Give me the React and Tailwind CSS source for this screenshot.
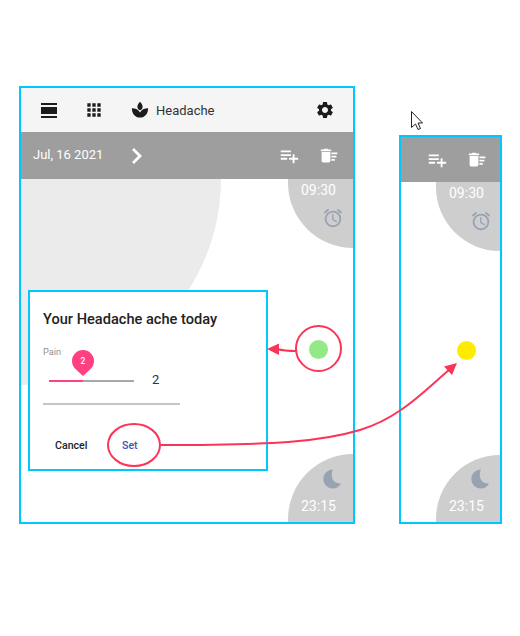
import { MdApps, MdSettings, MdPlaylistAdd, MdAccessAlarm } from "react-icons/md";

function DayIcon() {
  return (
    <svg viewBox="0 0 16 16" className="size-4" fill="#1c1c1c">
      <path d="M0 0h16v2H0zM0 4h16v7H0zM0 13h16v2H0z" />
    </svg>
  );
}

function SproutIcon() {
  return (
    <svg viewBox="0 0 18 18" className="size-[18px]" fill="#1c1c1c">
      <path d="M9 .8C10.6 2.6 11.6 4.2 11.6 5.8S10.5 8.7 9 9.3C7.5 8.7 6.4 7.4 6.4 5.8S7.4 2.6 9 .8zM.8 7.2C4.8 7.2 7.6 8.7 9 11.6 10.4 8.7 13.2 7.2 17.2 7.2 17 12.7 13.9 16.6 9 16.6S1 12.7.8 7.2z" />
    </svg>
  );
}

function SweepIcon() {
  return (
    <svg viewBox="0 0 18 16" className="h-4 w-[18px]" fill="white">
      <path d="M3.6 1.6 4.4.8h3.2l.8.8h2.8v1.600H.8V1.600zM1.600 4h8.800v8.800c0 1-.8 1.700-1.700 1.700H3.300c-1 0-1.700-.7-1.700-1.700zM11.400 4.600h6v1.700h-6zM11.400 7.800h5v1.700h-5zM11.400 11h3.400v1.700h-3.400z" />
    </svg>
  );
}

function Moon() {
  return (
    <svg viewBox="0 0 18 20" className="h-5 w-[18px]" fill="#98a3b2">
      <path d="M10 .6C4.500.8.4 4.800.4 10S4.500 19.400 9.700 19.400C13.500 19.400 16.500 17.500 18 14.400 12.500 14.800 8.800 11.200 8.800 6.200 8.800 4 9.200 2.200 10 .6z" />
    </svg>
  );
}

function Actions() {
  return (
    <>
      <MdPlaylistAdd className="size-[22px] text-white" />
      <div className="ml-[20px]"><SweepIcon /></div>
    </>
  );
}

function Morning({ className }) {
  return (
    <div className={`flex h-[69px] flex-col overflow-hidden rounded-bl-[68px] bg-[#cecece] ${className}`}>
      <span className="ml-[13px] mt-[3px] text-[14px] leading-4 text-white">09:30</span>
      <MdAccessAlarm className="ml-[34px] mt-[9px] size-[22px] shrink-0 text-[#98a3b2]" />
    </div>
  );
}

function Night({ className }) {
  return (
    <div className={`flex flex-col justify-end overflow-hidden rounded-tl-[68px] bg-[#cecece] pb-2 ${className}`}>
      <div className="ml-[35px] h-5"><Moon /></div>
      <span className="ml-[13px] mt-[9px] text-[14px] leading-4 text-white">23:15</span>
    </div>
  );
}

function Dialog() {
  return (
    <div className="absolute left-[7px] top-[111px] flex h-[181px] w-[240px] flex-col border-2 border-[#00c8ff] bg-white pl-[13px]">
      <h1 className="mt-[17px] text-[14.6px] font-medium leading-5 text-[#222]">Your Headache ache today</h1>
      <span className="mt-[17px] text-[9.2px] leading-3 text-[#929292]">Pain</span>
      <div className="mt-[12px] flex h-[22px] items-center">
        <div className="relative ml-[6px] flex h-[2px] w-[85px] bg-[#a8a8a8]">
          <div className="w-[34px] bg-[#ff4081]" />
          <svg viewBox="0 0 22 26" className="absolute -top-[30px] left-[23px] h-[26px] w-[22px]">
            <path d="M11 26 3.2 18.8A11 11 0 1 1 18.8 18.8z" fill="#ff4081" />
            <text x="11" y="14" textAnchor="middle" fontSize="8.5" fontWeight="500" fill="white">2</text>
          </svg>
        </div>
        <span className="-mt-[2px] ml-[18px] text-[13px] text-[#333]">2</span>
      </div>
      <div className="mt-[11px] h-[2px] w-[137px] bg-[#c6c6c6]" />
      <div className="mt-[33px] flex text-[10.6px] font-medium leading-4">
        <span className="ml-3 w-[67px] text-[#222]">Cancel</span>
        <span className="text-[#3f51b5]">Set</span>
      </div>
    </div>
  );
}

export default function App() {
  return (
    <div className="relative flex h-[636px] w-[520px] items-end gap-11 overflow-hidden bg-white pb-[112px] pl-[19px] font-[Roboto,sans-serif]">
      <div className="flex h-[438px] w-[336px] flex-col border-2 border-[#00c8ff]">
        <div className="flex h-11 items-center bg-[#f5f5f5]">
          <div className="ml-[20px] mt-px"><DayIcon /></div>
          <MdApps className="ml-[27px] size-5 text-[#1c1c1c]" />
          <div className="ml-[27px]"><SproutIcon /></div>
          <span className="ml-[7px] mt-[2px] text-[13px] text-[#333]">Headache</span>
          <MdSettings className="ml-auto mr-[18px] size-5 text-[#1c1c1c]" />
        </div>
        <div className="flex h-[47px] items-center bg-[#9e9e9e]">
          <span className="-mt-px ml-3 text-[13px] text-white">Jul, 16 2021</span>
          <svg viewBox="0 0 12 18" className="ml-[28px] mt-px h-[18px] w-3" fill="none" stroke="white" strokeWidth="2.8">
            <path d="M2 2 9 9 2 16" />
          </svg>
          <div className="ml-auto mr-[15px] flex items-center"><Actions /></div>
        </div>
        <div className="relative flex flex-1 flex-col items-end justify-between overflow-hidden">
          <div className="absolute -left-[212px] -top-[206px] size-[412px] rounded-full bg-[#ebebeb]" />
          <Morning className="w-[65px]" />
          <Dialog />
          <div className="mb-[3px] mr-[25px] size-[19px] rounded-full bg-[#93e986]" />
          <Night className="h-[68px] w-[65px]" />
        </div>
      </div>
      <div className="flex h-[389px] w-[103px] flex-col border-2 border-[#00c8ff]">
        <div className="flex h-[45px] items-center bg-[#9e9e9e] pl-[25px] pt-px"><Actions /></div>
        <div className="flex flex-1 flex-col items-end justify-between">
          <Morning className="w-16" />
          <div className="mb-[5px] mr-6 size-[19px] rounded-full bg-[#ffeb00]" />
          <Night className="h-[67px] w-16" />
        </div>
      </div>
      <svg viewBox="0 0 520 636" className="absolute inset-0 h-[636px] w-[520px]" fill="none" stroke="#fb3558" strokeWidth="2">
        <circle cx="318.5" cy="348.5" r="22.5" />
        <ellipse cx="134" cy="445" rx="26" ry="21" />
        <path d="M296 351Q284 351 277 349M160 445C275 445 320 442 360 430C400 418 425 390 449 370" />
        <path d="M267 349 279 343.5V355zM457 363 444 366.5 452 375z" fill="#fb3558" stroke="none" />
        <path d="M411.5 111.5V127.5L415.5 124 418 129.5 420.5 128.5 418 123H422.5z" fill="white" stroke="#222" strokeWidth="1" />
      </svg>
    </div>
  );
}
